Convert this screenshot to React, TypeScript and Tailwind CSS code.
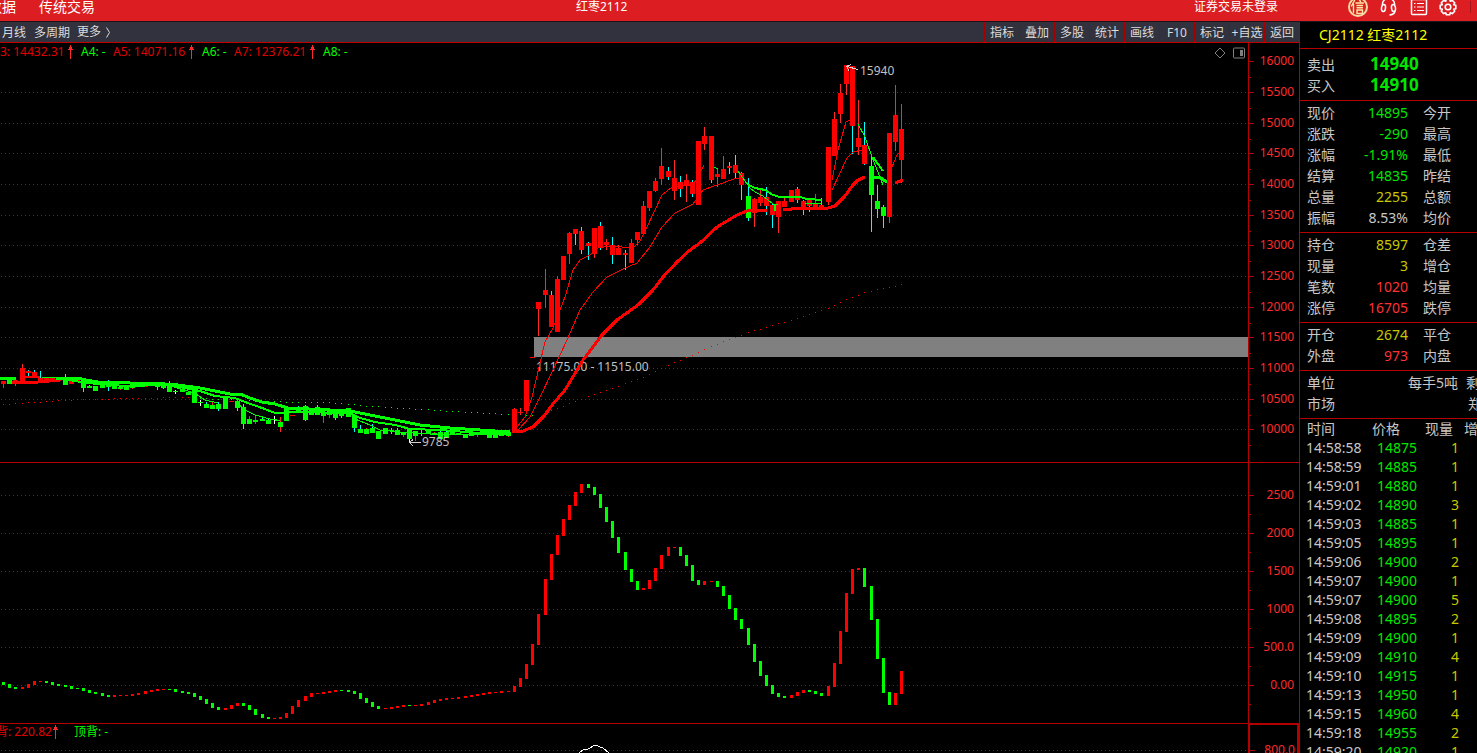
import React from "react";

type Bar = [number, number, string];
type Candle = [number, number, number, number, string];

const slot = (i: number) => Math.floor(2.6 + 6.1525 * i);

const FILL: Record<string, string> = { r: "#ff0000", g: "#00ff00", c: "#00ffff", w: "#ffffff", l: "#ff2a2a" };

// high, body top, body bottom, low, body colour + wick colour
const candles: Candle[] = [
  [381, 381, 384, 388, "rl"], [380, 380, 384, 384, "gc"], [380, 380, 383, 386, "rl"], [364, 368, 381, 381, "rl"],
  [370, 371, 373, 376, "rc"], [370, 372, 377, 377, "rc"], [371, 378, 382, 382, "rc"], [378, 378, 382, 382, "rc"],
  [377, 377, 381, 381, "rc"], [378, 378, 381, 381, "rc"], [374, 378, 385, 385, "gc"], [381, 381, 384, 384, "rc"],
  [379, 379, 382, 382, "rc"], [380, 380, 388, 392, "gc"], [385, 386, 388, 388, "gc"], [386, 386, 391, 391, "gc"],
  [383, 383, 388, 388, "gc"], [380, 385, 387, 391, "gc"], [386, 386, 389, 389, "gc"], [387, 387, 389, 390, "gl"],
  [385, 385, 390, 390, "gc"], [383, 383, 388, 389, "gl"], [385, 385, 387, 387, "gc"], [385, 385, 387, 387, "rc"],
  [384, 384, 386, 386, "gc"], [384, 384, 387, 390, "gc"], [385, 385, 388, 389, "gc"], [381, 384, 392, 392, "gc"],
  [390, 391, 392, 394, "gw"], [389, 389, 392, 392, "gc"], [391, 392, 395, 395, "gc"], [388, 388, 403, 403, "gc"],
  [400, 402, 403, 406, "gw"], [402, 404, 408, 408, "gc"], [402, 405, 409, 409, "gl"], [402, 404, 409, 411, "gc"],
  [396, 396, 409, 409, "gc"], [401, 401, 402, 402, "rc"], [401, 401, 408, 411, "gc"], [404, 407, 424, 429, "gc"],
  [416, 419, 424, 424, "gl"], [416, 420, 422, 424, "gl"], [417, 419, 421, 421, "gc"], [418, 420, 424, 424, "gc"],
  [416, 419, 420, 424, "gw"], [417, 422, 427, 432, "gl"], [407, 407, 421, 421, "gc"], [415, 415, 416, 416, "rc"],
  [406, 410, 412, 412, "gc"], [405, 406, 420, 421, "gc"], [409, 409, 415, 415, "gc"], [405, 407, 415, 415, "gc"],
  [412, 412, 416, 423, "gl"], [410, 410, 415, 418, "gl"], [411, 411, 418, 420, "gc"], [411, 411, 416, 418, "gc"],
  [408, 408, 417, 417, "gc"], [415, 415, 428, 432, "gc"], [425, 429, 433, 433, "gc"], [428, 429, 434, 434, "gl"],
  [424, 428, 433, 433, "gc"], [431, 431, 439, 439, "gc"], [428, 428, 434, 434, "gc"], [428, 430, 431, 434, "gc"],
  [428, 430, 435, 435, "gc"], [433, 433, 435, 437, "gl"], [428, 428, 439, 442, "gw"], [431, 431, 436, 441, "gl"],
  [430, 433, 434, 436, "gc"], [430, 430, 434, 434, "gc"], [432, 433, 434, 434, "gl"], [429, 432, 439, 439, "gc"],
  [430, 432, 438, 438, "gc"], [430, 431, 435, 435, "gc"], [433, 433, 435, 435, "gc"], [434, 434, 438, 438, "gc"],
  [433, 433, 436, 436, "gc"], [432, 432, 435, 437, "gl"], [431, 431, 435, 435, "gc"], [433, 434, 438, 438, "gc"],
  [433, 434, 438, 438, "gc"], [431, 431, 436, 436, "gc"], [431, 432, 436, 437, "gl"], [408, 409, 433, 433, "rl"],
  [408, 412, 413, 415, "rl"], [380, 380, 411, 411, "rl"], [357, 357, 358, 358, "rl"], [302, 302, 309, 336, "rl"],
  [269, 290, 295, 308, "rl"], [291, 295, 327, 327, "rc"], [276, 279, 332, 332, "rl"], [256, 256, 280, 280, "rl"],
  [232, 233, 254, 264, "rl"], [229, 229, 234, 245, "rc"], [227, 231, 250, 254, "rc"], [242, 243, 246, 260, "rc"],
  [228, 228, 254, 258, "rl"], [222, 226, 247, 250, "rc"], [239, 242, 245, 250, "rl"], [237, 245, 255, 264, "rc"],
  [245, 248, 255, 255, "rl"], [250, 253, 255, 270, "rc"], [239, 243, 263, 263, "rl"], [232, 232, 240, 245, "rl"],
  [201, 206, 234, 234, "rl"], [191, 191, 208, 211, "rl"], [178, 181, 191, 192, "rl"], [148, 166, 179, 185, "rl"],
  [167, 171, 177, 180, "rc"], [160, 178, 191, 200, "rl"], [176, 182, 189, 197, "rc"], [174, 180, 186, 202, "rl"],
  [180, 182, 194, 197, "rc"], [141, 141, 205, 205, "rl"], [127, 136, 144, 150, "rl"], [136, 136, 180, 183, "rc"],
  [168, 174, 177, 187, "rl"], [156, 169, 179, 179, "rl"], [162, 166, 168, 174, "rc"], [155, 165, 173, 178, "rc"],
  [172, 173, 185, 200, "rc"], [178, 196, 218, 221, "gc"], [198, 199, 213, 227, "rl"], [189, 197, 203, 206, "rl"],
  [187, 197, 206, 215, "rc"], [203, 205, 215, 228, "rc"], [201, 201, 217, 233, "rl"], [198, 201, 207, 207, "rl"],
  [190, 190, 202, 202, "rl"], [187, 189, 200, 203, "rc"], [200, 201, 208, 215, "rc"], [198, 198, 206, 212, "rc"],
  [194, 203, 209, 209, "rl"], [198, 205, 209, 209, "rc"], [147, 147, 202, 205, "rl"], [112, 119, 156, 156, "rl"],
  [84, 93, 114, 123, "rl"], [65, 65, 84, 95, "rl"], [66, 66, 126, 154, "rc"], [100, 138, 147, 155, "rl"],
  [122, 145, 164, 165, "rc"], [155, 166, 195, 232, "gc"], [185, 201, 209, 218, "gc"], [205, 207, 216, 228, "gc"],
  [133, 133, 217, 223, "rl"], [85, 115, 142, 151, "rl"], [104, 129, 160, 183, "rl"],
];

// top, bottom, colour
const momentum: Bar[] = [
  [682, 685, "g"], [684, 688, "g"], [687, 689, "g"], [687, 689, "r"], [684, 688, "r"], [681, 685, "r"], [681, 682, "r"],
  [681, 683, "g"], [682, 685, "g"], [684, 686, "g"], [685, 687, "g"], [686, 689, "g"], [688, 689, "g"], [688, 691, "g"],
  [690, 693, "g"], [692, 694, "g"], [693, 696, "g"], [695, 697, "g"], [695, 697, "r"], [695, 696, "r"], [695, 696, "r"],
  [694, 696, "r"], [693, 695, "r"], [691, 694, "r"], [690, 692, "r"], [689, 691, "r"], [689, 690, "r"], [689, 690, "g"],
  [689, 692, "g"], [691, 693, "g"], [692, 694, "g"], [693, 697, "g"], [696, 700, "g"], [699, 704, "g"], [703, 708, "g"],
  [707, 710, "g"], [708, 710, "r"], [705, 709, "r"], [703, 706, "r"], [703, 706, "g"], [705, 710, "g"], [709, 715, "g"],
  [714, 718, "g"], [717, 719, "g"], [718, 719, "r"], [717, 719, "r"], [713, 718, "r"], [706, 714, "r"], [700, 707, "r"],
  [696, 701, "r"], [693, 697, "r"], [693, 694, "r"], [692, 694, "r"], [691, 693, "r"], [690, 692, "r"], [690, 691, "g"],
  [690, 692, "g"], [691, 694, "g"], [693, 699, "g"], [698, 703, "g"], [702, 707, "g"], [706, 709, "g"], [708, 709, "r"],
  [707, 709, "r"], [706, 708, "r"], [705, 707, "r"], [705, 706, "g"], [705, 706, "r"], [704, 706, "r"], [702, 705, "r"],
  [700, 703, "r"], [699, 701, "r"], [698, 700, "r"], [698, 699, "r"], [697, 699, "r"], [696, 698, "r"], [695, 697, "r"],
  [694, 696, "r"], [693, 695, "r"], [692, 694, "r"], [692, 693, "r"], [691, 693, "r"], [691, 692, "r"], [686, 692, "r"],
  [678, 687, "r"], [664, 679, "r"], [644, 665, "r"], [614, 645, "r"], [579, 615, "r"], [554, 580, "r"], [535, 555, "r"],
  [519, 536, "r"], [505, 520, "r"], [492, 506, "r"], [484, 493, "r"], [484, 488, "g"], [487, 495, "g"], [494, 508, "g"],
  [507, 522, "g"], [521, 538, "g"], [537, 553, "g"], [552, 570, "g"], [569, 582, "g"], [581, 590, "g"], [588, 590, "r"],
  [580, 589, "r"], [568, 581, "r"], [555, 569, "r"], [547, 556, "r"], [547, 548, "r"], [547, 556, "g"], [555, 566, "g"],
  [565, 581, "g"], [580, 585, "g"], [581, 585, "r"], [581, 582, "r"], [581, 587, "g"], [586, 596, "g"], [595, 609, "g"],
  [608, 620, "g"], [619, 629, "g"], [628, 645, "g"], [644, 662, "g"], [661, 676, "g"], [675, 686, "g"], [685, 694, "g"],
  [693, 697, "g"], [696, 698, "g"], [695, 698, "r"], [692, 696, "r"], [690, 693, "r"], [690, 692, "g"], [691, 694, "g"],
  [693, 696, "g"], [686, 696, "r"], [663, 687, "r"], [631, 664, "r"], [593, 632, "r"], [569, 594, "r"], [568, 570, "r"],
  [568, 587, "g"], [586, 620, "g"], [619, 659, "g"], [658, 693, "g"], [692, 705, "g"], [693, 705, "r"], [671, 694, "r"],
];

const lines: { c: string; w: number; p: string }[] = [
  { c: "g", w: 3, p: "0,378 10,378 16,379" },
  { c: "r", w: 3, p: "12,382 38,382 60,380" },
  { c: "r", w: 2, p: "24,377 40,377" },
  { c: "g", w: 1, p: "42,377 60,377" },
  { c: "g", w: 3, p: "56,378 78,378 86,380 98,382 130,383 165,384 178,385 200,388 230,394 240,394 250,398 262,402 275,404 288,408 330,410 350,411 370,415 390,419 420,425 450,428 480,430 510,432" },
  { c: "g", w: 2, p: "62,379 75,381 86,383 100,384 125,386 165,385 185,388 200,391 215,396 235,398 245,402 262,408 275,413 300,412 350,413 360,418 375,422 395,425 410,429 440,430 480,433 510,434" },
  { c: "g", w: 1, p: "170,386 185,390 196,394 205,400 218,403" },
  { c: "g", w: 1, p: "238,404 247,411 255,415 270,419 280,421" },
  { c: "g", w: 1, p: "355,419 370,425 380,430 400,432 430,434 510,434" },
  { c: "r", w: 3, p: "515,432 523,431 533,427 545,415 552,405 565,390 583,360 602,335 617,320 638,305 653,290 663,277 677,262 690,250 700,243 717,227 737,215 747,211 767,210" },
  { c: "r", w: 3, p: "783,210 800,208 828,208 835,206 845,196 852,186 858,180 865,177" },
  { c: "g", w: 3, p: "873,177 879,177 887,182" },
  { c: "r", w: 3, p: "895,183 903,180" },
  { c: "g", w: 1, p: "858,124 865,137 872,157 883,185" },
  { c: "g", w: 2, p: "873,157 883,171" },
  { c: "g", w: 2, p: "747,184 755,188 765,190 773,195 780,197 800,197 807,199 822,200" },
  { c: "g", w: 1, p: "738,171 750,188 755,192 763,196 773,204 778,205" },
  { c: "g", w: 2, p: "775,205 775,211" },
  { c: "g", w: 1, p: "805,203 822,203" },
  { c: "g", w: 1, p: "714,167 718,169" },
  { c: "r", w: 1, p: "517,427 525,417 532,397 540,363 545,342 553,328 565,297 573,270 580,260 590,255 598,248 610,246 633,248 640,241 647,227 662,195 672,187 693,185 700,173 704,165" },
  { c: "r", w: 1, p: "518,430 530,417 540,397 553,370 567,340 580,310 593,292 607,277 623,269 637,263 650,247 662,227 675,213 693,204 703,190 717,185 737,178 742,178" },
  { c: "r", w: 1, p: "832,180 838,150 846,122 850,120" },
  { c: "r", w: 1, p: "832,190 847,158 853,152 862,150" },
  { c: "r", w: 1, p: "892,167 897,155 901,152" },
];

const trend: { c: string; p: [number, number][] }[] = [
  { c: "r", p: [[0, 404], [36, 402], [60, 400], [90, 399], [130, 398], [192, 397]] },
  { c: "g", p: [[198, 398], [243, 400], [262, 401], [300, 402], [330, 402], [370, 406], [420, 409], [470, 412], [510, 414], [533, 415]] },
  { c: "r", p: [[539, 412], [551, 410], [563, 406], [577, 400], [600, 392], [623, 384], [647, 375], [673, 362], [687, 357], [705, 348], [745, 333], [800, 317], [828, 308], [847, 299], [865, 292], [903, 284]] },
];

const trendDots = trend.flatMap(({ c, p }) => {
  const out: { x: number; y: number; c: string }[] = [];
  for (let i = 0; i < 148; i++) {
    const x = slot(i) + 1;
    for (let k = 0; k < p.length - 1; k++) {
      const [x0, y0] = p[k];
      const [x1, y1] = p[k + 1];
      if (x >= x0 && x < x1) out.push({ x, y: Math.round(y0 + ((y1 - y0) * (x - x0)) / (x1 - x0)), c });
    }
  }
  return out;
});

const priceTicks: [number, string][] = [
  [61, "16000"], [92, "15500"], [123, "15000"], [153, "14500"], [184, "14000"], [215, "13500"], [245, "13000"],
  [276, "12500"], [307, "12000"], [337, "11500"], [368, "11000"], [399, "10500"], [429, "10000"],
];
const momentumTicks: [number, string][] = [
  [495, "2500"], [533, "2000"], [571, "1500"], [609, "1000"], [647, "500.0"], [685, "0.00"],
];

function Grid({ ys }: { ys: number[] }) {
  return (
    <>
      {ys.map((y) => (
        <line key={y} x1="1" x2="100%" y1={y + 0.5} y2={y + 0.5} stroke="#8c1414" strokeDasharray="1 3" />
      ))}
    </>
  );
}

function Axis({ ticks, top, half }: { ticks: [number, string][]; top: number; half: number }) {
  return (
    <svg className="block h-full w-full" shapeRendering="crispEdges">
      {ticks.map(([y, label]) => (
        <g key={label}>
          <rect x="0" y={y - top} width="5" height="1" fill="#b40000" />
          <rect x="0" y={y - top + half} width="2" height="1" fill="#b40000" />
          <text x="45" y={y - top + 4} textAnchor="end" fontSize="12" fill="#ff2a2a">{label}</text>
        </g>
      ))}
    </svg>
  );
}

function Up() {
  return (
    <svg className="ml-auto mr-2 h-[14px] w-[5px] shrink-0" viewBox="0 0 5 14" shapeRendering="crispEdges" fill="#ff2a2a">
      <path d="M2 0h1v14H2zM1 2h3v2H1zM0 4h5v1H0z" />
    </svg>
  );
}

type Quote = { a: string; v: string; c: string; b: string };
const G = "text-[#00e600]";
const Y = "text-[#c8c800]";
const R = "text-[#ff3232]";
const W = "text-[#c8c8c8]";

const sections: Quote[][] = [
  [
    { a: "现价", v: "14895", c: G, b: "今开" },
    { a: "涨跌", v: "-290", c: G, b: "最高" },
    { a: "涨幅", v: "-1.91%", c: G, b: "最低" },
    { a: "结算", v: "14835", c: G, b: "昨结" },
    { a: "总量", v: "2255", c: Y, b: "总额" },
    { a: "振幅", v: "8.53%", c: W, b: "均价" },
  ],
  [
    { a: "持仓", v: "8597", c: Y, b: "仓差" },
    { a: "现量", v: "3", c: Y, b: "增仓" },
    { a: "笔数", v: "1020", c: R, b: "均量" },
    { a: "涨停", v: "16705", c: R, b: "跌停" },
  ],
  [
    { a: "开仓", v: "2674", c: Y, b: "平仓" },
    { a: "外盘", v: "973", c: R, b: "内盘" },
  ],
];

const trades: [string, string, string][] = [
  ["14:58:58", "14875", "1"], ["14:58:59", "14885", "1"], ["14:59:01", "14880", "1"], ["14:59:02", "14890", "3"],
  ["14:59:03", "14885", "1"], ["14:59:05", "14895", "1"], ["14:59:06", "14900", "2"], ["14:59:07", "14900", "1"],
  ["14:59:07", "14900", "5"], ["14:59:08", "14895", "2"], ["14:59:09", "14900", "1"], ["14:59:09", "14910", "4"],
  ["14:59:10", "14915", "1"], ["14:59:13", "14950", "1"], ["14:59:15", "14960", "4"], ["14:59:18", "14955", "2"],
  ["14:59:20", "14920", "1"],
];

const tools = ["指标", "叠加", "多股", "统计", "画线", "F10", "标记", "+自选", "返回"];

function Header() {
  return (
    <header className="flex h-[21px] shrink-0 items-start bg-[#dc1e23] text-white">
      <div className="flex h-[14px] w-full items-center">
        <nav className="flex w-[576px] shrink-0 gap-[23px] text-sm leading-[14px]">
          <button className="-ml-3">数据</button>
          <button>传统交易</button>
        </nav>
        <h1 className="text-xs leading-[14px]">红枣2112</h1>
        <button className="ml-auto text-xs leading-[14px]">证券交易未登录</button>
        <div className="ml-[70px] flex shrink-0 items-center">
          <button aria-label="信用" className="mr-3">
            <svg className="block h-5 w-5" viewBox="0 0 20 20">
              <circle cx="10" cy="10" r="9" fill="#d8201c" stroke="#f6d9a4" strokeWidth="2" />
              <path d="M6.500 3.500L3.500 9M5.500 7V15.500M11.500 3L12.500 4.500M8 6H15.500M9 8.500H14.500M9 10.800H14.500M9 13H14.500V16.500H9Z" fill="none" stroke="#ffe6a8" strokeWidth="1.400" strokeLinecap="round" />
            </svg>
          </button>
          <button aria-label="客服" className="mr-[13px]">
            <svg className="block h-5 w-[17px]" viewBox="0 0 17 20" fill="none" stroke="#fff" strokeWidth="1.500">
              <path d="M2.500 8C2 4.500 4.500 1.500 8.500 1.500S15 4.500 14.500 8" />
              <ellipse cx="3.500" cy="11" rx="2" ry="3.500" transform="rotate(8 3.500 11)" />
              <ellipse cx="13.500" cy="11" rx="2" ry="3.500" transform="rotate(-8 13.500 11)" />
              <path d="M15 14C14.500 16.500 12.500 17.800 9.500 18" />
            </svg>
          </button>
          <button aria-label="列表" className="mr-[11px]">
            <svg className="block h-[18px] w-[18px]" viewBox="0 0 18 18" fill="none" stroke="#fff">
              <rect x="1.5" y="1.5" width="15" height="15" rx="1" strokeWidth="1.5" />
              <path d="M4 5.5h1.5M7 5.5h7M4 9h1.5M7 9h7M4 12.5h1.5M7 12.5h7" strokeWidth="1.2" />
            </svg>
          </button>
          <button aria-label="设置">
            <svg className="block h-[18px] w-[18px]" viewBox="0 0 18 18" fill="none" stroke="#fff" strokeWidth="1.600" strokeLinejoin="round">
              <path d="M7.300 1.200H10.700L11.300 3.300L13.300 2.400L15.700 4.800L14.700 6.700L16.800 7.300V10.700L14.700 11.300L15.700 13.200L13.300 15.600L11.300 14.700L10.700 16.800H7.300L6.700 14.700L4.700 15.600L2.300 13.200L3.300 11.300L1.200 10.700V7.300L3.300 6.700L2.300 4.800L4.700 2.400L6.700 3.300Z" />
              <circle cx="9" cy="9" r="2.800" />
            </svg>
          </button>
          <span className="ml-[13px] mr-[6px] h-3 w-px bg-[#a81418]" />
        </div>
      </div>
    </header>
  );
}

function Toolbar() {
  return (
    <div className="flex h-[21px] shrink-0 items-stretch border-b border-[#c00000] bg-[#32323e] text-xs leading-[22px] text-[#dcdcdc]">
      <div className="flex gap-[7px] pl-[2px]">
        <button>月线</button>
        <button className="ml-px">多周期</button>
        <button className="flex items-center gap-1">
          更多
          <svg className="h-[11px] w-[6px]" viewBox="0 0 6 11" fill="none" stroke="#dcdcdc">
            <path d="M1.5 0.5L4.5 5.5L1.5 10.5" />
          </svg>
        </button>
      </div>
      <div className="ml-auto flex">
        {tools.map((t) => (
          <button key={t} className="w-[35px] whitespace-nowrap border-l border-[#a00000] text-center">{t}</button>
        ))}
      </div>
    </div>
  );
}

function PricePane() {
  return (
    <section className="flex h-[420px] shrink-0 border-b border-[#b40000]">
      <div className="relative min-w-0 flex-1">
        <svg className="block h-full w-full" shapeRendering="crispEdges">
          <g transform="translate(0 -43)">
            <Grid ys={priceTicks.slice(1).map(([y]) => y)} />
            <rect x="534" y="337" width="100%" height="20" fill="#808080" />
            {trendDots.map((d, i) => (
              <rect key={i} x={d.x} y={d.y} width="1" height="1" fill={FILL[d.c]} />
            ))}
            <text x="536" y="371" fontSize="12" fill="#c0c0c0">11175.00 - 11515.00</text>
            {candles.map(([hi, top, bottom, lo, c], i) => (
              <g key={i}>
                {lo - hi > bottom - top && <rect x={slot(i) + 1} y={hi} width="1" height={lo - hi} fill={FILL[c[1]]} />}
                <rect x={slot(i) - 1} y={top} width="5" height={bottom - top} fill={FILL[c[0]]} />
              </g>
            ))}
            {lines.map((l, i) => (
              <polyline key={i} points={l.p} fill="none" stroke={FILL[l.c]} strokeWidth={l.w} />
            ))}
            <path d="M858 69.500L847 66.500M851 64.500L846.500 66.500L849 70.500" fill="none" stroke="#d0d0d0" />
            <text x="860" y="75" fontSize="12" fill="#c0c0c0">15940</text>
            <path d="M421 442.500H410M413 439.500L409.500 442.500L413 446" fill="none" stroke="#d0d0d0" />
            <text x="422" y="446" fontSize="12" fill="#c0c0c0">9785</text>
          </g>
        </svg>
        <div className="absolute left-0 top-px flex h-4 items-center whitespace-nowrap text-xs leading-4 text-[#e00000]">
          <span className="flex w-[81px] items-center">3: 14432.31<Up /></span>
          <span className="w-8 text-[#00ff00]">A4: -</span>
          <span className="flex w-[89px] items-center">A5: 14071.16<Up /></span>
          <span className="w-8 text-[#00ff00]">A6: -</span>
          <span className="flex w-[89px] items-center">A7: 12376.21<Up /></span>
          <span className="text-[#00ff00]">A8: -</span>
        </div>
        <div className="absolute right-[3px] top-1 flex items-center gap-[7px]">
          <button aria-label="菱形标记">
            <svg className="block h-3 w-3" viewBox="0 0 12 12" fill="none" stroke="#808080">
              <path d="M6 1L11 6L6 11L1 6Z" />
            </svg>
          </button>
          <button aria-label="侧栏">
            <svg className="block h-3 w-3" viewBox="0 0 12 12" fill="none" stroke="#808080">
              <rect x="0.500" y="1" width="11" height="10" rx="1" />
              <rect x="7" y="3" width="3" height="6" fill="#808080" stroke="none" />
            </svg>
          </button>
        </div>
      </div>
      <div className="w-[51px] shrink-0 border-l border-[#b40000]">
        <Axis ticks={priceTicks} top={43} half={16} />
      </div>
    </section>
  );
}

function MomentumPane() {
  return (
    <section className="flex h-[261px] shrink-0 border-b border-[#b40000]">
      <div className="min-w-0 flex-1">
        <svg className="block h-full w-full" shapeRendering="crispEdges">
          <g transform="translate(0 -463)">
            <Grid ys={momentumTicks.map(([y]) => y)} />
            {momentum.map(([top, bottom, c], i) => (
              <rect key={i} x={slot(i)} y={top} width="3" height={bottom - top} fill={FILL[c]} />
            ))}
          </g>
        </svg>
      </div>
      <div className="w-[51px] shrink-0 border-l border-[#b40000]">
        <Axis ticks={momentumTicks} top={463} half={19} />
      </div>
    </section>
  );
}

function DivergencePane() {
  return (
    <section className="flex min-h-0 flex-1">
      <div className="relative min-w-0 flex-1">
        <svg className="block h-full w-full" shapeRendering="crispEdges">
          <g transform="translate(0 -724)">
            <Grid ys={[750]} />
            <polyline points="579,753 583,750 588,749 595,745 603,748 609,753" fill="none" stroke="#fff" />
          </g>
        </svg>
        <div className="absolute left-0 top-0 flex h-4 items-center whitespace-nowrap text-xs leading-4 text-[#e00000]">
          <span className="-ml-1 flex w-[78px] items-center justify-between">
            背: 220.82
            <span className="mr-2 flex"><Up /></span>
          </span>
          <span className="text-[#00ff00]">顶背: -</span>
        </div>
      </div>
      <div className="w-[51px] shrink-0 border-x-2 border-t border-[#b40000]">
        <Axis ticks={[[750, "800.0"]]} top={725} half={16} />
      </div>
    </section>
  );
}

function QuotePanel() {
  return (
    <aside className="flex w-[178px] shrink-0 flex-col overflow-hidden border-l border-[#b40000] text-sm leading-[21px] text-[#c8c8c8]">
      <h2 className="h-[27px] shrink-0 border-b border-[#b40000] pl-[19px] pt-[2px] text-[#ffff00]">CJ2112 红枣2112</h2>
      <dl className="shrink-0 border-b border-[#b40000] pb-1 pl-[7px] pt-[5px]">
        {[["卖出", "14940"], ["买入", "14910"]].map(([k, v]) => (
          <div key={k} className="flex h-[21px]">
            <dt className="w-[63px]">{k}</dt>
            <dd className="text-[17px] font-bold leading-[19px] text-[#00e600]">{v}</dd>
          </div>
        ))}
      </dl>
      {sections.map((rows, i) => (
        <dl key={i} className="shrink-0 border-b border-[#b40000] pb-1 pl-[7px] pt-px">
          {rows.map((q) => (
            <div key={q.a} className="flex h-[21px] whitespace-nowrap">
              <dt className="w-10">{q.a}</dt>
              <dd className={`w-[61px] text-right ${q.c}`}>{q.v}</dd>
              <dt className="ml-[15px]">{q.b}</dt>
            </div>
          ))}
        </dl>
      ))}
      <dl className="shrink-0 border-b border-[#b40000] pb-1 pl-[7px] pt-px">
        <div className="flex h-[21px] whitespace-nowrap">
          <dt className="w-[101px] shrink-0">单位</dt>
          <dd className="w-[58px] shrink-0">每手5吨</dd>
          <dt>剩</dt>
        </div>
        <div className="flex h-[21px] whitespace-nowrap">
          <dt className="w-[161px] shrink-0">市场</dt>
          <dd>郑</dd>
        </div>
      </dl>
      <table className="w-[185px] shrink-0 table-fixed border-collapse leading-[19px]">
        <thead>
          <tr className="h-[19px] text-left">
            <th className="w-[72px] p-0 pl-[7px] font-normal">时间</th>
            <th className="w-[45px] p-0 font-normal">价格</th>
            <th className="w-[42px] p-0 pl-2 font-normal">现量</th>
            <th className="p-0 pl-[5px] font-normal">增</th>
          </tr>
        </thead>
        <tbody>
          {trades.map(([t, p, n], i) => (
            <tr key={i} className="h-[19px]">
              <td className="p-0 pl-[6px]">{t}</td>
              <td className="p-0 text-right text-[#00e600]">{p}</td>
              <td className="p-0 text-right text-[#c8c800]">{n}</td>
              <td className="p-0" />
            </tr>
          ))}
        </tbody>
      </table>
    </aside>
  );
}

export default function App() {
  return (
    <div className="flex h-screen flex-col overflow-hidden bg-black font-['Noto_Sans','Noto_Sans_CJK_SC',sans-serif]">
      <Header />
      <main className="flex min-h-0 flex-1 border-t border-[#201418]">
        <div className="flex min-w-0 flex-1 flex-col">
          <Toolbar />
          <PricePane />
          <MomentumPane />
          <DivergencePane />
        </div>
        <QuotePanel />
      </main>
    </div>
  );
}
